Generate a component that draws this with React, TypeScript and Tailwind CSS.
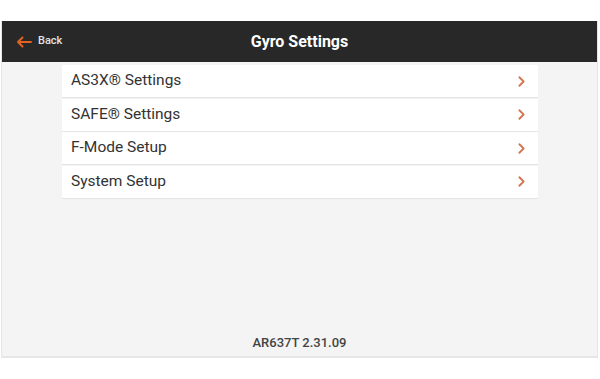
import { ChevronRight } from 'lucide-react'

const items = ['AS3X® Settings', 'SAFE® Settings', 'F-Mode Setup', 'System Setup']

export default function App() {
  return (
    <div className="w-[600px] h-[379px] bg-white pt-[21px] font-['Roboto',sans-serif]">
      <div className="mx-[1px] w-[597px] h-[337px] flex flex-col bg-[#f4f4f4] border-b-2 border-x border-[#e6e6e6]">
        <div className="h-[41px] bg-[#282828] flex items-center relative shrink-0">
          <div className="absolute left-[14px] top-0 h-full flex items-center gap-[6px]">
            <svg width="16" height="12" viewBox="0 0 16 12" fill="none" stroke="#e2621f" strokeWidth="2" strokeLinecap="round" strokeLinejoin="round">
              <path d="M15 6H2M6.5 1.5L2 6l4.5 4.5" />
            </svg>
            <span className="text-[11px] text-[#e4e4e4] font-medium">Back</span>
          </div>
          <div className="flex-1 text-center text-white text-[16px] font-bold">Gyro Settings</div>
        </div>
        <div className="flex flex-col gap-[1.5px] pt-[3px] pl-[60px] w-[536px]">
          {items.map(t => (
            <div key={t} className="h-[32px] bg-white flex items-center justify-between pl-[9px] pr-[8px] shadow-[0_1px_1px_rgba(0,0,0,0.06)]">
              <span className="text-[15.5px] text-[#333]">{t}</span>
              <ChevronRight size={17} strokeWidth={2.6} color="#d4754f" />
            </div>
          ))}
        </div>
        <div className="flex-1" />
        <div className="text-center text-[13px] text-[#444] font-medium pb-[4px]">AR637T 2.31.09</div>
      </div>
    </div>
  )
}
